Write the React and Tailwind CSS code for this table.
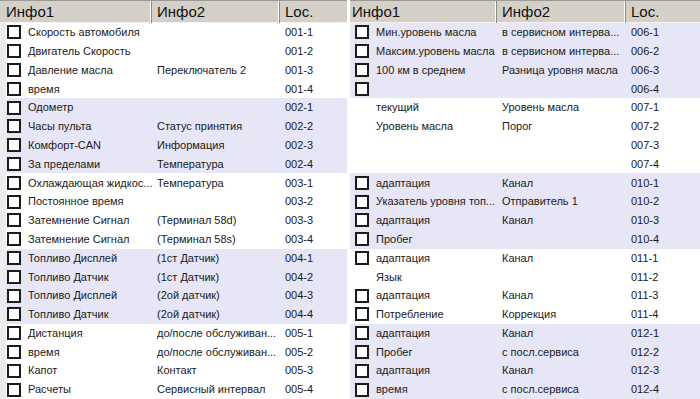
const left = [
  ["Скорость автомобиля", "", "001-1"],
  ["Двигатель Скорость", "", "001-2"],
  ["Давление масла", "Переключатель 2", "001-3"],
  ["время", "", "001-4"],
  ["Одометр", "", "002-1"],
  ["Часы пульта", "Статус принятия", "002-2"],
  ["Комфорт-CAN", "Информация", "002-3"],
  ["За пределами", "Температура", "002-4"],
  ["Охлаждающая жидкос...", "Температура", "003-1"],
  ["Постоянное время", "", "003-2"],
  ["Затемнение Сигнал", "(Терминал 58d)", "003-3"],
  ["Затемнение Сигнал", "(Терминал 58s)", "003-4"],
  ["Топливо Дисплей", "(1ст Датчик)", "004-1"],
  ["Топливо Датчик", "(1ст Датчик)", "004-2"],
  ["Топливо Дисплей", "(2ой датчик)", "004-3"],
  ["Топливо Датчик", "(2ой датчик)", "004-4"],
  ["Дистанция", "до/после обслуживан...", "005-1"],
  ["время", "до/после обслуживан...", "005-2"],
  ["Капот", "Контакт", "005-3"],
  ["Расчеты", "Сервисный интервал", "005-4"],
];

// false in 4th slot = row without a checkbox
const right = [
  ["Мин.уровень масла", "в сервисном интерва...", "006-1"],
  ["Максим.уровень масла", "в сервисном интерва...", "006-2"],
  ["100 км в среднем", "Разница уровня масла", "006-3"],
  ["", "", "006-4"],
  ["текущий", "Уровень масла", "007-1", false],
  ["Уровень масла", "Порог", "007-2", false],
  ["", "", "007-3", false],
  ["", "", "007-4", false],
  ["адаптация", "Канал", "010-1"],
  ["Указатель уровня топ...", "Отправитель 1", "010-2"],
  ["адаптация", "Канал", "010-3"],
  ["Пробег", "", "010-4"],
  ["адаптация", "Канал", "011-1"],
  ["Язык", "", "011-2", false],
  ["адаптация", "Канал", "011-3"],
  ["Потребление", "Коррекция", "011-4"],
  ["адаптация", "Канал", "012-1"],
  ["Пробег", "с посл.сервиса", "012-2"],
  ["адаптация", "Канал", "012-3"],
  ["время", "с посл.сервиса", "012-4"],
];

function HeaderCell({ label, className }) {
  return (
    <div
      className={`flex h-full items-center border-r border-r-[#8c8a85] shadow-[inset_-1px_0_0_#fff] text-[15px] text-[#111] ${className}`}
    >
      {label}
    </div>
  );
}

function Box() {
  return <div className="h-[14px] w-[14px] shrink-0 border-2 border-[#1c1c1c] bg-white" />;
}

function Table({ rows, lavenderFirst, cols, headPad, boxPad, strip }) {
  return (
    <div className="flex flex-col">
      <div
        className="grid h-[23px] border-t border-t-[#9c9a94] border-b border-b-[#f4f3ef] bg-[#d4d0c8]"
        style={{ gridTemplateColumns: cols }}
      >
        <HeaderCell label="Инфо1" className={headPad} />
        <HeaderCell label="Инфо2" className="pl-[5px]" />
        <HeaderCell label="Loc." className="pl-[5px] border-r-0 shadow-none" />
      </div>
      {rows.map(([a, b, loc, box], i) => {
        const band = Math.floor(i / 4) % 2 === (lavenderFirst ? 0 : 1);
        return (
          <div
            key={loc}
            className={`grid h-[18.8px] items-center text-[11px] text-[#1a1a1a] ${band ? "bg-[#e6e6f6]" : "bg-white"}`}
            style={{ gridTemplateColumns: cols }}
          >
            <div className="flex h-full items-center">
              {strip && <div className="h-full w-[6px] shrink-0 bg-[#ececec]" />}
              <div className={`flex items-center gap-[7px] whitespace-nowrap ${boxPad}`}>
                {box === false ? <div className="h-[14px] w-[14px] shrink-0" /> : <Box />}
                <span>{a}</span>
              </div>
            </div>
            <div className="whitespace-nowrap pl-[5px]">{b}</div>
            <div className="whitespace-nowrap pl-[5px]">{loc}</div>
          </div>
        );
      })}
    </div>
  );
}

export default function App() {
  return (
    <div className="flex h-[399px] w-[700px] gap-[3px] overflow-hidden bg-white font-['Liberation_Sans',Arial,sans-serif]">
      <div className="w-[347px]">
        <Table
          rows={left}
          lavenderFirst={false}
          cols="152px 128px 67px"
          headPad="pl-[6px]"
          boxPad="pl-[1px]"
          strip
        />
      </div>
      <div className="w-[350px]">
        <Table
          rows={right}
          lavenderFirst
          cols="147px 129px 74px"
          headPad="pl-[2px]"
          boxPad="pl-[5px]"
        />
      </div>
    </div>
  );
}
